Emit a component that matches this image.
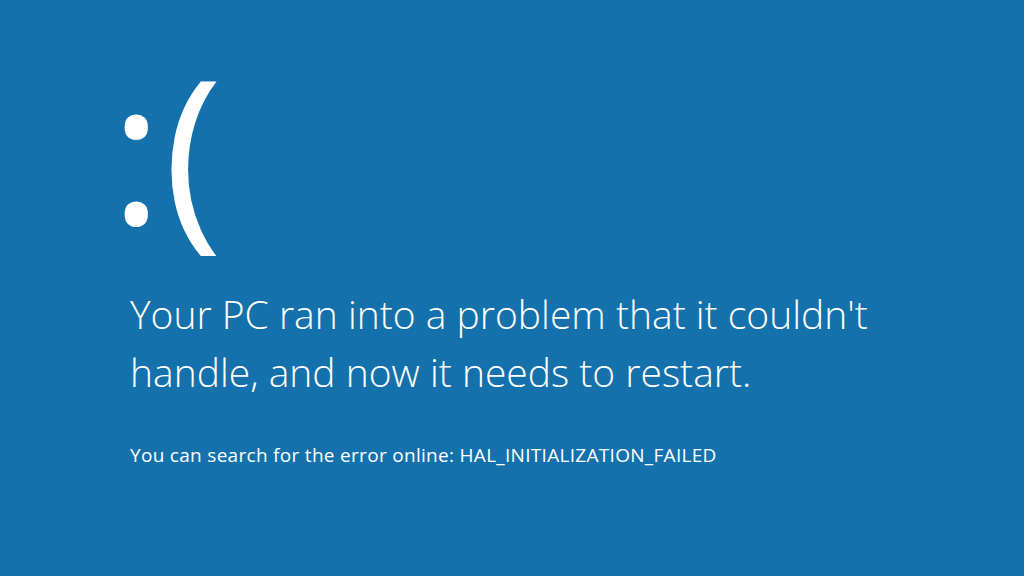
import React from 'react';

export default function App() {
  return (
    <div className="w-[1024px] h-[576px] bg-[#1571ab] text-white overflow-hidden font-['Open_Sans',sans-serif]">
      <div className="pl-[130px] pt-[27px]">
        <div className="-ml-[20px] text-[200px] leading-[240px] font-normal tracking-[1px]">:(</div>
        <div className="mt-[18px] text-[39px] leading-[58px] font-light">
          <p>Your PC ran into a problem that it couldn't</p>
          <p>handle, and now it needs to restart.</p>
        </div>
        <p className="mt-[42px] text-[19px] leading-[24px] font-normal tracking-[0.3px]">
          You can search for the error online: HAL_INITIALIZATION_FAILED
        </p>
      </div>
    </div>
  );
}
